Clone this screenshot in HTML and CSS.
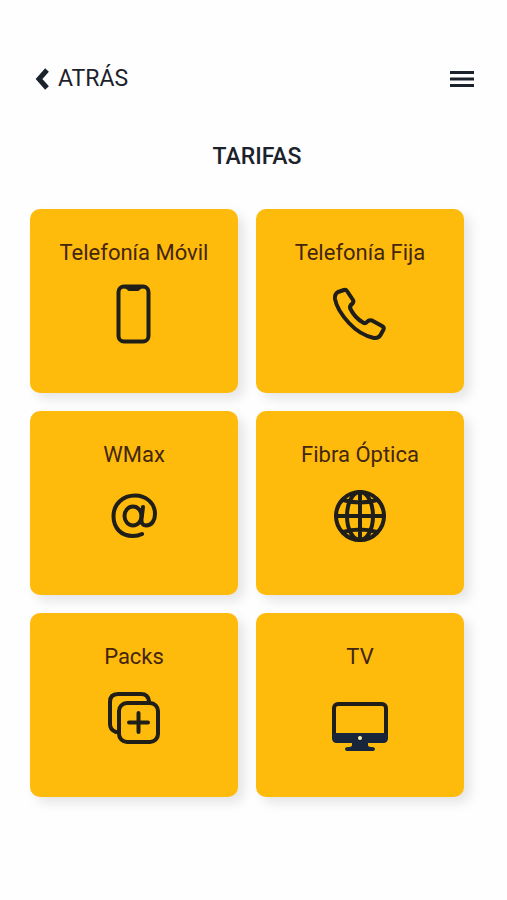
FILE: index.html
```html
<!DOCTYPE html>
<html lang="es">
<head>
    <meta charset="UTF-8">
    <meta name="viewport" content="width=device-width, initial-scale=1.0">
    <title>Tarifas</title>
    <link rel="stylesheet" href="styles.css">
</head>
<body>

    <!-- Header -->
    <header>
        <a href="#" class="back">
            <svg class="back-icon" viewBox="0 0 16 24"><path d="M13 3L5 12L13 21"/></svg>
            ATRÁS
        </a>
        <button type="button" class="menu" aria-label="Menú">
            <svg viewBox="0 0 24 18"><path d="M0 2.500H24M0 9H24M0 15.500H24"/></svg>
        </button>
    </header>

    <!-- Rates -->
    <main>
        <h1>TARIFAS</h1>
        <div class="cards">
            <a href="#" class="card">
                <h2>Telefonía Móvil</h2>
                <svg class="icon" viewBox="0 0 66 66">
                    <rect x="17.500" y="5.500" width="30" height="55" rx="5.500"/>
                    <path class="fill" d="M22 4H43V7Q40 7 39 8.500Q38.500 10 36 10H29Q26.500 10 26 8.500Q25 7 22 7Z"/>
                </svg>
            </a>
            <a href="#" class="card">
                <h2>Telefonía Fija</h2>
                <svg class="icon" viewBox="0 0 66 66">
                    <path d="M11 11L17 9Q19 8.500 20 10L26 19Q27 21 25.500 22.500Q22 25 23.500 28Q28 37 36 41.500Q38.500 43 40.500 40.500Q42 38.500 45 39.500L55 45Q57.500 46.500 56.500 48.500L53.500 54Q51.500 57.500 47 57Q33 54 22 42Q10 29 8 18Q7.500 13 11 11Z"/>
                </svg>
            </a>
            <a href="#" class="card">
                <h2>WMax</h2>
                <svg class="icon" viewBox="0 0 66 66">
                    <ellipse cx="32" cy="33" rx="8.500" ry="9.500"/>
                    <path d="M42 24L40.500 36Q40 42.500 45 42.500C51 42.500 54 37 54 31C54 20 45 12.500 34 12.500C22 12.500 12.500 21 12.500 33C12.500 45 20 53 32 53Q37 53 41 51"/>
                </svg>
            </a>
            <a href="#" class="card">
                <h2>Fibra Óptica</h2>
                <svg class="icon" viewBox="0 0 66 66">
                    <circle cx="33" cy="33" r="24"/>
                    <ellipse cx="33" cy="33" rx="13" ry="24"/>
                    <path d="M33 9V57M9 33H57M16 17Q33 22 50 17M16 49Q33 44 50 49"/>
                </svg>
            </a>
            <a href="#" class="card">
                <h2>Packs</h2>
                <svg class="icon" viewBox="0 0 66 66">
                    <rect x="18" y="18" width="39" height="39" rx="8"/>
                    <path d="M15 47Q9 45 9 39V17Q9 9 17 9H40Q47 9 48 16M37.500 28V47M28 37.500H47"/>
                </svg>
            </a>
            <a href="#" class="card">
                <h2>TV</h2>
                <svg class="icon" viewBox="0 0 66 66">
                    <rect x="7" y="19" width="52" height="37" rx="4"/>
                    <path class="chin" d="M5 48H61V53Q61 58 56 58H41V60Q41 62 45 62Q48 62 48 64Q48 66 46 66H20Q18 66 18 64Q18 62 21 62Q25 62 25 60V58H10Q5 58 5 53Z"/>
                    <circle class="dot" cx="33" cy="53" r="2"/>
                </svg>
            </a>
        </div>
    </main>

</body>
</html>
```

FILE: styles.css
```css
* {
    margin: 0;
    padding: 0;
    box-sizing: border-box;
}

body {
    font-family: 'Roboto', sans-serif;
    background-color: #fefefe;
    color: #1c222b;
    padding: 61px 43px 60px 30px;
}

svg {
    display: block;
    fill: none;
    stroke: #1c222b;
}

/* Header */
header {
    display: flex;
    justify-content: space-between;
    align-items: center;
    height: 36px;
    padding-left: 4px;
}

.back {
    display: flex;
    align-items: center;
    gap: 8px;
    color: #1c222b;
    font-size: 23px;
    font-weight: 400;
    line-height: 36px;
    text-decoration: none;
}

.back-icon {
    width: 16px;
    height: 24px;
    stroke-width: 5;
}

.menu {
    margin-right: -10px;
    border: none;
    background: none;
    cursor: pointer;
}

.menu svg {
    width: 24px;
    height: 18px;
    stroke-width: 3;
}

/* Rates */
h1 {
    margin: 44px 0 36px;
    font-size: 23px;
    font-weight: 500;
    line-height: 32px;
    text-align: center;
    padding-left: 20px;
}

.cards {
    display: grid;
    grid-template-columns: 1fr 1fr;
    gap: 18px;
}

.card {
    display: flex;
    flex-direction: column;
    align-items: center;
    gap: 12px;
    min-height: 184px;
    padding-top: 28px;
    border-radius: 10px;
    background-color: #ffbb0c;
    box-shadow: 6px 6px 12px rgba(0, 0, 0, 0.1);
    text-decoration: none;
}

.card h2 {
    color: #43260f;
    font-size: 22px;
    font-weight: 400;
    line-height: 32px;
}

.icon {
    width: 66px;
    height: 66px;
    stroke: #1f1e18;
    stroke-width: 4;
    stroke-linecap: round;
    stroke-linejoin: round;
}

.fill {
    fill: #1f1e18;
    stroke: none;
}

.chin {
    fill: #17263a;
    stroke: none;
}

.dot {
    fill: #ffe9b0;
    stroke: none;
}
```
